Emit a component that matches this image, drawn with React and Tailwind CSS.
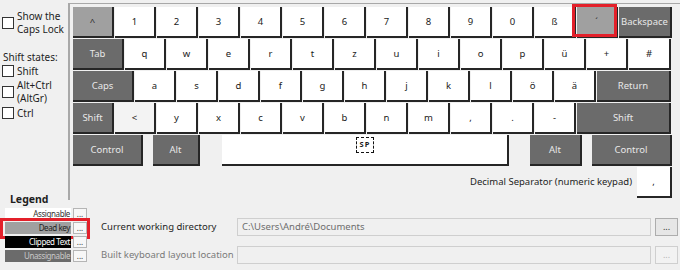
import React from 'react';

const tone = {
  w: 'bg-white text-[#1a1a1a]',
  d: 'bg-[#6b6b6b] text-[#e8e8e8]',
  g: 'bg-[#a0a0a0] text-[#2a2a2a]',
  l: 'bg-[#f3f3f3] text-[#1a1a1a]',
};

function Key({ label, w = 'w-[41px]', kind = 'w', className = '', children }) {
  return (
    <div
      className={`relative h-[31px] shrink-0 flex items-center justify-center whitespace-nowrap border-r-2 border-b-2 border-[#262626] text-[9.5px] leading-none ${w} ${tone[kind]} ${className}`}
    >
      {label}
      {children}
    </div>
  );
}

const row1 = ['1', '2', '3', '4', '5', '6', '7', '8', '9', '0', 'ß'];
const row2 = ['q', 'w', 'e', 'r', 't', 'z', 'u', 'i', 'o', 'p', 'ü', '+'];
const row3 = ['a', 's', 'd', 'f', 'g', 'h', 'j', 'k', 'l', 'ö', 'ä'];
const row4 = ['y', 'x', 'c', 'v', 'b', 'n', 'm', ',', '.', '-'];

function Check({ children, className = '' }) {
  return (
    <div className={`flex items-center ${className}`}>
      <div className="ml-[2px] w-[12px] h-[12px] border border-[#333333] bg-white shrink-0" />
      <div className="ml-[3px] text-[10px] leading-[13px] whitespace-nowrap">{children}</div>
    </div>
  );
}

function LegendItem({ label, cls, children }) {
  return (
    <div className="relative flex items-center h-[12px]">
      <div className={`w-[66px] h-[12px] text-right pr-[1px] text-[8px] leading-[12px] tracking-[-0.4px] whitespace-nowrap ${cls}`}>{label}</div>
      <div className="ml-[2px] w-[14px] h-[12px] border border-[#b5b5b5] bg-[#f7f7f7] text-[8px] leading-[8px] flex items-center justify-center text-[#333]">...</div>
      {children}
    </div>
  );
}

export default function App() {
  return (
    <div className="w-[680px] h-[270px] overflow-hidden bg-[#f0f0f0] text-[#1e1e1e] font-['Noto_Sans',sans-serif]">
      <div className="flex items-start h-[206px]">
        {/* left options column */}
        <div className="w-[68px] h-[206px] flex flex-col">
          <Check className="mt-[10px]">
            Show the
            <br />
            Caps Lock
          </Check>
          <div className="mt-[14px] ml-[3px] text-[10px] leading-[14px]">Shift states:</div>
          <Check className="h-[14px]">Shift</Check>
          <Check className="mt-[1px]">
            Alt+Ctrl
            <br />
            (AltGr)
          </Check>
          <Check className="mt-[1px] h-[14px]">Ctrl</Check>
          <div className="mt-auto ml-[10px] text-[10.5px] leading-[14px] font-bold">Legend</div>
        </div>

        {/* keyboard panel */}
        <div className="mt-[3px] flex-1 h-[197px] border-t border-l-2 border-[#a8a8a8] pl-[3px] pt-[3px] flex flex-col gap-[1px]">
          <div className="flex gap-[1px]">
            <Key label="^" kind="g" />
            {row1.map((k) => (
              <Key key={k} label={k} />
            ))}
            <Key label="´" kind="g">
              <div className="absolute -left-[5px] -top-[3px] -right-[1px] -bottom-[1px] border-[3px] border-[#e3202a]" />
            </Key>
            <Key label="Backspace" kind="d" w="w-[53px]" />
          </div>
          <div className="flex gap-[1px]">
            <Key label="Tab" kind="d" w="w-[51px]" />
            {row2.map((k) => (
              <Key key={k} label={k} />
            ))}
            <Key label="#" w="w-[42px]" />
          </div>
          <div className="flex gap-[1px]">
            <Key label="Caps" kind="d" w="w-[61px]" />
            {row3.map((k) => (
              <Key key={k} label={k} />
            ))}
            <Key label="Return" kind="d" w="w-[74px]" />
          </div>
          <div className="flex gap-[1px]">
            <Key label="Shift" kind="d" />
            <Key label="<" kind="l" />
            {row4.map((k) => (
              <Key key={k} label={k} />
            ))}
            <Key label="Shift" kind="d" w="w-[94px]" />
          </div>
          <div className="flex">
            <Key label="Control" kind="d" w="w-[70px]" />
            <Key label="Alt" kind="d" w="w-[47px]" className="ml-[10px]" />
            <Key w="w-[287px]" className="ml-[22px] !items-start pt-[2px]">
              <div className="w-[18px] h-[16px] border border-dashed border-[#111] flex items-center justify-center text-[7.5px] font-bold tracking-[1px] pl-[1px]">
                SP
              </div>
            </Key>
            <Key label="Alt" kind="d" w="w-[52px]" className="ml-[21px]" />
            <Key label="Control" kind="d" w="w-[80px]" className="ml-[10px]" />
          </div>
          <div className="w-[599px] flex justify-end items-center">
            <div className="text-[9.5px] mr-[5px] whitespace-nowrap">Decimal Separator (numeric keypad)</div>
            <Key label="," w="w-[35px]" />
          </div>
        </div>
      </div>

      {/* bottom: legend + paths */}
      <div className="flex items-start">
        <div className="ml-[5px] mt-[2px] flex flex-col gap-[2px]">
          <LegendItem label="Assignable" cls="bg-white text-[#333]" />
          <LegendItem label="Dead key" cls="bg-[#a0a0a0] text-[#1e1e1e]">
            <div className="absolute -left-[5px] -top-[4px] -right-[3px] -bottom-[5px] border-[3px] border-[#e3202a]" />
          </LegendItem>
          <LegendItem label="Clipped Text" cls="bg-black text-white" />
          <LegendItem label="Unassignable" cls="bg-[#6b6b6b] text-[#c8c8c8]" />
        </div>
        <div className="ml-[14px] mt-[12px] flex flex-col gap-[10px]">
          <div className="flex items-center h-[18px]">
            <div className="w-[136px] text-[9.5px] text-[#1e1e1e] whitespace-nowrap">Current working directory</div>
            <div className="w-[414px] h-[18px] border border-[#cfcfcf] bg-[#f0f0f0] pl-[4px] text-[9.5px] leading-[16px] text-[#6d6d6d]">
              C:\Users\André\Documents
            </div>
            <div className="ml-[4px] w-[23px] h-[18px] border border-[#adadad] bg-[#e6e6e6] text-[9px] flex items-center justify-center text-[#333]">
              ...
            </div>
          </div>
          <div className="flex items-center h-[18px]">
            <div className="w-[136px] text-[9.5px] text-[#7a7a7a] whitespace-nowrap">Built keyboard layout location</div>
            <div className="w-[414px] h-[18px] border border-[#cfcfcf] bg-[#f0f0f0]" />
            <div className="ml-[4px] w-[23px] h-[18px] border border-[#cfcfcf] bg-[#f2f2f2] text-[9px] flex items-center justify-center text-[#b5b5b5]">
              ...
            </div>
          </div>
        </div>
      </div>
    </div>
  );
}
